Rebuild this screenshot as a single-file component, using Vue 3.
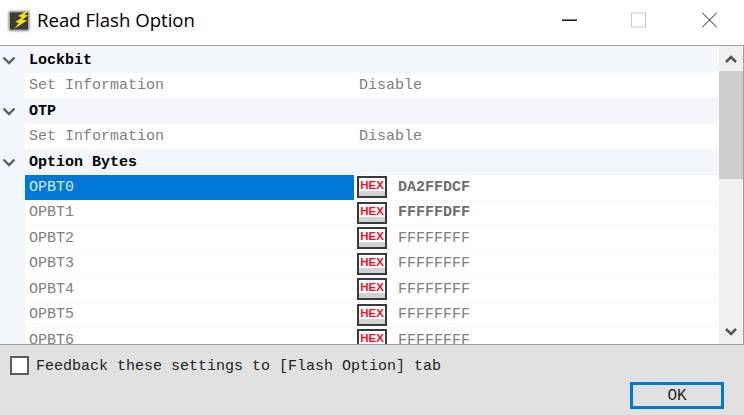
<template>
  <div class="dialog">
    <div class="titlebar">
      <svg class="app-icon" width="25" height="25" viewBox="0 0 25 25">
        <defs>
          <filter id="soft" x="-20%" y="-20%" width="140%" height="140%"><feGaussianBlur stdDeviation="0.8" /></filter>
        </defs>
        <rect x="1.5" y="3" width="21" height="20" rx="2" fill="#8a8a8a" filter="url(#soft)" />
        <rect x="3" y="4.5" width="18" height="17" fill="#3b3b3b" />
        <path d="M24 0.5 L11 8 L15 9.5 L8 14 L12 15 L7 21 L20 12.5 L15.5 11.5 L21 7.5 L17.5 6.5 Z" fill="#f7de12" />
      </svg>
      <span class="title">Read Flash Option</span>
      <div class="win-btns">
        <span class="win-btn"><svg width="15" height="16" viewBox="0 0 15 16"><path d="M0 8.2H15" stroke="#000" stroke-width="1.4" /></svg></span>
        <span class="win-btn max"><svg width="15" height="16" viewBox="0 0 15 16"><rect x="0.5" y="1" width="14" height="14" fill="none" stroke="#ccc" /></svg></span>
        <span class="win-btn"><svg width="15" height="16" viewBox="0 0 15 16"><path d="M0 0.5L15 15.5M15 0.5L0 15.5" stroke="#222" /></svg></span>
      </div>
    </div>

    <div class="tree-wrap">
      <div class="tree">
        <template v-for="g in groups" :key="g.name">
          <div class="group-row">
            <svg class="chev" width="14" height="9" viewBox="0 0 14 9"><path d="M1.5 1.5L7 7L12.5 1.5" fill="none" stroke="#5a5f66" stroke-width="2.4" /></svg>
            <span class="group-name">{{ g.name }}</span>
          </div>
          <div v-for="r in g.rows" :key="r.name" class="row">
            <div class="cell-name" :class="{ selected: r.selected }">{{ r.name }}</div>
            <div class="cell-value">
              <template v-if="r.hex">
                <span class="hex-icon">HEX</span>
                <span class="hex-val" :class="{ changed: r.changed }">{{ r.hex }}</span>
              </template>
              <span v-else class="plain-val">{{ r.value }}</span>
            </div>
          </div>
        </template>
      </div>
      <div class="scrollbar">
        <div class="scroll-btn">
          <svg width="12" height="8" viewBox="0 0 12 8"><path d="M1 7L6 2L11 7" fill="none" stroke="#555" stroke-width="2.6" /></svg>
        </div>
        <div class="scroll-track"><div class="scroll-thumb"></div></div>
        <div class="scroll-btn">
          <svg width="12" height="8" viewBox="0 0 12 8"><path d="M1 1L6 6L11 1" fill="none" stroke="#555" stroke-width="2.6" /></svg>
        </div>
      </div>
    </div>

    <div class="footer">
      <label class="feedback">
        <span class="checkbox"></span>
        <span class="feedback-text">Feedback these settings to [Flash Option] tab</span>
      </label>
      <button class="ok-btn">OK</button>
    </div>
  </div>
</template>

<script setup>
const groups = [
  { name: 'Lockbit', rows: [{ name: 'Set Information', value: 'Disable' }] },
  { name: 'OTP', rows: [{ name: 'Set Information', value: 'Disable' }] },
  {
    name: 'Option Bytes',
    rows: [
      { name: 'OPBT0', hex: 'DA2FFDCF', changed: true, selected: true },
      { name: 'OPBT1', hex: 'FFFFFDFF', changed: true },
      { name: 'OPBT2', hex: 'FFFFFFFF' },
      { name: 'OPBT3', hex: 'FFFFFFFF' },
      { name: 'OPBT4', hex: 'FFFFFFFF' },
      { name: 'OPBT5', hex: 'FFFFFFFF' },
      { name: 'OPBT6', hex: 'FFFFFFFF' }
    ]
  }
]
</script>

<style>
html, body { margin: 0; background: #fff; }
</style>

<style scoped>
.dialog {
  width: 744px; height: 415px; overflow: hidden;
  display: flex; flex-direction: column;
  background: #fff; font-family: "Liberation Mono", monospace; font-size: 15px;
}
.titlebar {
  height: 45px; flex-shrink: 0; box-sizing: border-box;
  display: flex; align-items: center; padding: 0 0 5px 7px;
}
.app-icon { margin-right: 5px; flex-shrink: 0; }
.title { font-family: "Open Sans", sans-serif; font-size: 18.6px; color: #000; position: relative; top: -1px; }
.win-btns { margin-left: auto; display: flex; margin-right: 27px; gap: 54px; }
.win-btn { display: block; width: 15px; height: 16px; }
.win-btn svg { display: block; }
.win-btn.max { margin-right: 2px; }

.tree-wrap {
  height: 300px; flex-shrink: 0; box-sizing: border-box; display: flex;
  border-top: 1px solid #a0a0a0; border-bottom: 1px solid #a0a0a0; border-right: 1px solid #a0a0a0;
}
.tree { flex: 1; min-width: 0; overflow: hidden; background: #f3f6fb; padding-top: 1.5px; }
.group-row {
  height: 25.5px; box-sizing: border-box; display: flex; align-items: center;
  background: #f3f6fb; color: #000; font-weight: 700;
}
.chev { margin-left: 2px; margin-right: 13px; flex-shrink: 0; }
.group-name { white-space: nowrap; }
.row {
  height: 25.5px; box-sizing: border-box; display: flex;
  margin-left: 25px; background: #fff; border-bottom: 1px solid #f3f6fb; color: #808080;
}
.cell-name {
  width: 329px; flex-shrink: 0; box-sizing: border-box; padding-left: 4px;
  display: flex; align-items: center;
}
.cell-name.selected { background: #0078d7; color: #dbe9f6; }
.cell-value { flex: 1; display: flex; align-items: center; padding-left: 3px; }
.plain-val { padding-left: 2px; }
.hex-icon {
  width: 30px; height: 22px; box-sizing: border-box; margin-right: 11px; flex-shrink: 0;
  border: 2px solid #3a3a3a;
  background: linear-gradient(#fff 70%, #d2d2d2 70%);
  color: #ff0a1e; font: 700 11.5px/14px "Liberation Sans", sans-serif; text-align: center;
}
.hex-val.changed { font-weight: 700; color: #6e6e6e; }

.scrollbar {
  width: 24px; flex-shrink: 0; margin-left: 1px;
  display: flex; flex-direction: column; background: #f0f0f0;
}
.scroll-btn { height: 25px; flex-shrink: 0; display: flex; align-items: center; justify-content: center; }
.scroll-track { flex: 1; }
.scroll-thumb { height: 108px; background: #cdcdcd; }

.footer {
  flex: 1; background: #e1e1e1; display: flex; flex-direction: column;
  padding: 10px 20px 6px 10px; color: #222;
}
.feedback { display: flex; align-items: center; gap: 7px; height: 20px; white-space: nowrap; }
.feedback-text { padding-top: 2px; }
.checkbox {
  width: 19px; height: 19px; box-sizing: border-box; flex-shrink: 0;
  border: 2px solid #5a5a5a; background: #fff;
}
.ok-btn {
  align-self: flex-end; margin-top: auto; width: 94px; height: 27px; box-sizing: border-box;
  border: 3px solid #0078d7; background: #e1e1e1; color: #222; padding: 1px 0 0 0;
  font-family: "Liberation Mono", monospace; font-size: 16px;
}
</style>
